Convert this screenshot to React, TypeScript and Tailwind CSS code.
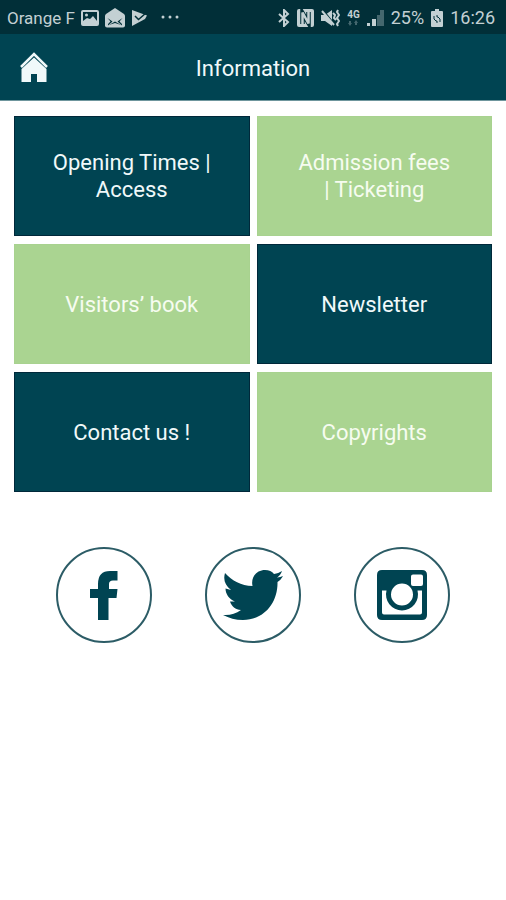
// App.tsx
import type { ReactNode } from "react";

type Tile = {
  label: string;
  tone: "dark" | "light";
};

const TILES: Tile[] = [
  { label: "Opening Times | Access", tone: "dark" },
  { label: "Admission fees | Ticketing", tone: "light" },
  { label: "Visitors’ book", tone: "light" },
  { label: "Newsletter", tone: "dark" },
  { label: "Contact us !", tone: "dark" },
  { label: "Copyrights", tone: "light" },
];

function StatusBar() {
  return (
    <div className="flex h-[34px] items-center justify-between bg-[#012f38] pt-px pr-[11px] pl-[7px] text-lg leading-5 text-[#c3d0d3]">
      <div className="flex items-center gap-1.5">
        <span className="text-[17px] leading-5">Orange F</span>
        <svg width="18" height="18" viewBox="0 0 18 18" aria-hidden="true">
          <path
            fill="currentColor"
            fillRule="evenodd"
            d="M2 1h14a2 2 0 0 1 2 2v12a2 2 0 0 1-2 2H2a2 2 0 0 1-2-2V3a2 2 0 0 1 2-2zm0 2v9l4-3 3 1 3-3 4 5V3z"
          />
          <circle cx="5.500" cy="6" r="1.500" fill="currentColor" />
        </svg>
        <svg width="20" height="20" viewBox="0 0 20 20" aria-hidden="true">
          <path
            fill="currentColor"
            d="M10 0 19 6q1 .8 1 2v9.500q0 2-2 2H2q-2 0-2-2V8q0-1.200 1-2z"
          />
          <path
            fill="#012f38"
            d="m2.500 10 5 3.500-4.500 4V16l2.500-2.500zM17.500 10l-5 3.500 4.500 4V16l-2.500-2.500zM4 17l6-3.500L16 17l-6-2z"
          />
        </svg>
        <svg width="17" height="18" viewBox="0 0 17 18" aria-hidden="true">
          <path fill="currentColor" d="M1 1 16 6.500 14 10 1 17z" />
          <path
            d="m4 7 3.500 3.500L15 4"
            fill="none"
            stroke="#012f38"
            strokeWidth="1.500"
          />
        </svg>
        <svg width="28" height="18" viewBox="0 0 28 18" aria-hidden="true">
          <g fill="currentColor">
            <circle cx="9" cy="8" r="1.500" />
            <circle cx="16" cy="8" r="1.500" />
            <circle cx="23" cy="8" r="1.500" />
          </g>
        </svg>
      </div>

      <div className="flex items-center gap-[7px]">
        <svg width="12" height="18" viewBox="0 0 12 18" aria-hidden="true">
          <path
            d="m1 5 9 8-4 4V1l4 4-9 8"
            fill="none"
            stroke="currentColor"
            strokeWidth="2"
          />
        </svg>
        <svg width="17" height="18" viewBox="0 0 17 18" aria-hidden="true">
          <rect width="17" height="18" rx="2" fill="currentColor" />
          <path
            d="M5.500 15V4l6 10V3"
            fill="none"
            stroke="#012f38"
            strokeWidth="4.500"
          />
          <path
            d="M5.500 15.500V3.500l6 11V2.500"
            fill="none"
            stroke="currentColor"
            strokeWidth="2.500"
          />
        </svg>
        <svg width="19" height="18" viewBox="0 0 19 18" aria-hidden="true">
          <path fill="currentColor" d="M0 6h4l7-5v16l-7-5H0z" />
          <path d="m2 1 12 15" stroke="#012f38" strokeWidth="1.500" />
          <path d="m1 2 12 14" stroke="currentColor" strokeWidth="2" />
          <path
            d="m12 4 2 2-1 3 2 2M17 1l-1 2 2 3-2 3 2 3-2 3 1 2"
            fill="none"
            stroke="currentColor"
            strokeWidth="2"
          />
        </svg>
        <span className="flex flex-col items-center">
          <span className="text-[10px] leading-[10px] font-bold">4G</span>
          <svg width="10" height="6" viewBox="0 0 10 6" aria-hidden="true">
            <path
              d="M0 3l2 3 2-3H3V1H1v2zM6 3l2-3 2 3H9v2H7V3z"
              fill="currentColor"
              opacity="0.350"
            />
          </svg>
        </span>
        <svg width="17" height="18" viewBox="0 0 17 18" aria-hidden="true">
          <g fill="currentColor">
            <path d="M0 14h3v3H0z" />
            <path d="M5 10h4v7H5z" />
            <path d="M10 6h3v11h-3zM13 1h4v16h-4z" opacity="0.350" />
          </g>
        </svg>
        <span>25%</span>
        <svg width="12" height="18" viewBox="0 0 12 18" aria-hidden="true">
          <path
            fill="currentColor"
            d="M4 0h4v2h3q1 0 1 1v14q0 1-1 1H1q-1 0-1-1V3q0-1 1-1h3z"
          />
          <path
            d="M3 7v3l2 2h1M9 13v-3L7 8H6M6 6v2M6 12v2"
            fill="none"
            stroke="#012f38"
            strokeWidth="1"
          />
        </svg>
        <span>16:26</span>
      </div>
    </div>
  );
}

function HomeIcon() {
  return (
    <svg width="30" height="32" viewBox="0 0 30 32" aria-hidden="true">
      <path
        d="M2 16 15 3l13 13"
        fill="none"
        stroke="currentColor"
        strokeWidth="2.500"
      />
      <path fill="currentColor" d="M15 6.500 27.500 18v13H18v-8h-6v8H2.500V18z" />
    </svg>
  );
}

function MenuTile({ label, tone }: Tile) {
  return (
    <button
      type="button"
      className={[
        "flex h-[120px] items-center justify-center border px-9 text-center",
        tone === "dark"
          ? "border-[#00283a] bg-[#004452] text-[#f0f9fa]"
          : "border-[#a8d28f] bg-[#aad491] text-[#f6fcf0]",
      ].join(" ")}
    >
      {label}
    </button>
  );
}

function SocialLink({ name, children }: { name: string; children: ReactNode }) {
  return (
    <a
      href="#"
      aria-label={name}
      className="flex size-24 items-center justify-center rounded-full border-2 border-[#2c5c66] text-[#004452]"
    >
      {children}
    </a>
  );
}

export default function App() {
  return (
    <div className="min-h-screen bg-white font-[Roboto,sans-serif] text-[22px] leading-[27px]">
      <StatusBar />

      <header className="grid h-[67px] grid-cols-[1fr_auto_1fr] items-center border-b border-[#6f969d] bg-[#004452] px-[19px] text-[#f0f9fa]">
        <button type="button" aria-label="Home" className="w-fit">
          <HomeIcon />
        </button>
        <h1 className="pt-0.5">Information</h1>
      </header>

      <main>
        <div className="grid grid-cols-2 gap-x-[7px] gap-y-2 px-3.5 pt-[15px]">
          {TILES.map((tile) => (
            <MenuTile key={tile.label} {...tile} />
          ))}
        </div>

        <nav className="flex justify-between px-14 pt-[55px]">
          <SocialLink name="Facebook">
            <svg width="28" height="50" viewBox="0 0 28 50" aria-hidden="true">
              <path
                fill="currentColor"
                d="M27.500 1v9.500h-4.500q-4 0-4 3.500v5h8.500l-1 9H18.500v22H8V28H0v-9h8v-5Q8 1 20 1z"
              />
            </svg>
          </SocialLink>
          <SocialLink name="Twitter">
            <svg width="60" height="50" viewBox="0 0 60 50" aria-hidden="true">
              <path
                fill="currentColor"
                d="M2 3C9 11 18 15.500 29.500 16C27.500 7 34 0 42 0c4 0 7 1.500 9 4 3-.5 5.500-1.500 8-3-1 3-2.500 5-5 6.500 2.500-.2 4-.8 6-1.500-1.500 2.500-3 4.500-5.500 6C55 33 41 50 20 50 12.500 50 6 48 0 45c7 .5 12.500-1 18-5-5.500-.5-9.500-3.500-11-8.500h5C6 29 2.500 24 2.500 18.500L8 20C2 15.500 0 9.500 2 3z"
              />
            </svg>
          </SocialLink>
          <SocialLink name="Instagram">
            <svg width="50" height="50" viewBox="0 0 50 50" aria-hidden="true">
              <path
                fill="currentColor"
                fillRule="evenodd"
                d="M5 0h40q5 0 5 5v40q0 5-5 5H5q-5 0-5-5V5q0-5 5-5zM36 4.500q-2 0-2 2V14q0 2 2 2h8q2 0 2-2V6.500q0-2-2-2zM5 20.500v22q0 2 2 2h36q2 0 2-2v-22h-4.500A16 16 0 1 1 9.500 20.500zM25 13.500a11 11 0 1 0 0 22 11 11 0 0 0 0-22z"
              />
            </svg>
          </SocialLink>
        </nav>
      </main>
    </div>
  );
}
